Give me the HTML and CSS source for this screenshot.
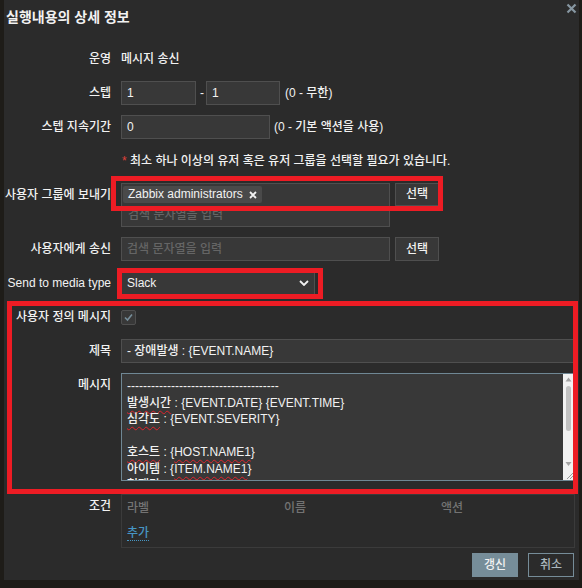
FILE: index.html
```html
<!DOCTYPE html>
<html lang="ko">
<head>
<meta charset="utf-8">
<title>실행내용의 상세 정보</title>
<link rel="stylesheet" href="styles.css">
</head>
<body>
<div class="dialog">
  <div class="header">
    <h4 class="title">실행내용의 상세 정보</h4>
    <button class="close" type="button" aria-label="닫기">
      <svg width="11" height="11" viewBox="0 0 11 11"><path d="M1.5 1.5 L9.5 9.5 M9.5 1.5 L1.5 9.5" stroke="#8797a2" stroke-width="2.2" fill="none"/></svg>
    </button>
  </div>

  <div class="form">
    <div class="label h23">운영</div>
    <div class="field h23">메시지 송신</div>

    <div class="label">스텝</div>
    <div class="field">
      <div class="input w75">1</div>
      <span class="dash">-</span>
      <div class="input w74">1</div>
      <span class="hint">(0 - 무한)</span>
    </div>

    <div class="label">스텝 지속기간</div>
    <div class="field">
      <div class="input w149">0</div>
      <span class="hint hint-sm">(0 - 기본 액션을 사용)</span>
    </div>

    <div class="label"></div>
    <div class="field note"><span class="req">*</span>&nbsp;최소 하나 이상의 유저 혹은 유저 그룹을 선택할 필요가 있습니다.</div>

    <div class="label">사용자 그룹에 보내기</div>
    <div class="field top">
      <div class="ms">
        <div class="ms-tags">
          <span class="tag">Zabbix administrators
            <svg width="8" height="8" viewBox="0 0 8 8"><path d="M1 1 L7 7 M7 1 L1 7" stroke="#f2f2f2" stroke-width="1.8" fill="none"/></svg>
          </span>
        </div>
        <div class="ms-search">검색 문자열을 입력</div>
      </div>
      <button class="btn" type="button">선택</button>
    </div>

    <div class="label">사용자에게 송신</div>
    <div class="field">
      <div class="input w269 placeholder">검색 문자열을 입력</div>
      <button class="btn btn24" type="button">선택</button>
    </div>

    <div class="label">Send to media type</div>
    <div class="field">
      <div class="select">
        <span>Slack</span>
        <svg width="10" height="6" viewBox="0 0 10 6"><path d="M1 1 L5 5 L9 1" stroke="#f2f2f2" stroke-width="1.8" fill="none"/></svg>
      </div>
    </div>

    <div class="label">사용자 정의 메시지</div>
    <div class="field">
      <span class="cb">
        <svg width="13" height="13" viewBox="0 0 13 13"><path d="M3 6.5 L5.5 9 L10 3.5" stroke="#768d99" stroke-width="1.6" fill="none"/></svg>
      </span>
    </div>

    <div class="label">제목</div>
    <div class="field">
      <div class="input full">- 장애발생 : {EVENT.NAME}</div>
    </div>

    <div class="label">메시지</div>
    <div class="field top">
      <div class="ta">
        <div class="ta-text">
          <div class="ln">--------------------------------------</div>
          <div class="ln"><span class="sp">발생시간</span> : {EVENT.DATE} {EVENT.TIME}</div>
          <div class="ln"><span class="sp">심각도</span> : {EVENT.SEVERITY}</div>
          <div class="ln">&nbsp;</div>
          <div class="ln"><span class="sp">호스트</span> : {<span class="sp">HOST.NAME1</span>}</div>
          <div class="ln">아이템 : {<span class="sp">ITEM.NAME1</span>}</div>
          <div class="ln">현재값 : {ITEM.LASTVALUE1}</div>
        </div>
        <div class="sb">
          <svg width="11" height="106" viewBox="0 0 11 106">
            <path d="M2.5 7.5 L8.5 7.5 L5.5 3.5 Z" fill="#a3a3a3"/>
            <rect x="3" y="12" width="5" height="45" rx="2.5" fill="#c1c1c1"/>
            <path d="M2.5 88 L8.5 88 L5.5 92 Z" fill="#a3a3a3"/>
            <path d="M10 99 L4 105 M10 102 L7 105" stroke="#9a9a9a" stroke-width="1" fill="none"/>
          </svg>
        </div>
      </div>
    </div>

    <div class="label cond-label">조건</div>
    <div class="field top cond-field">
      <div class="cond">
        <div class="cond-head">
          <span>라벨</span><span>이름</span><span>액션</span>
        </div>
        <div class="cond-add"><a class="link" href="#">추가</a></div>
      </div>
    </div>
  </div>

  <div class="footer">
    <button class="btn-main" type="button">갱신</button>
    <button class="btn-alt" type="button">취소</button>
  </div>

  <div class="mark mark-1"></div>
  <div class="mark mark-2"></div>
  <div class="mark mark-3"></div>
</div>
</body>
</html>
```

FILE: styles.css
```css
* { box-sizing: border-box; }
html, body { margin: 0; padding: 0; }
body {
  width: 582px;
  height: 588px;
  overflow: hidden;
  background: #1e1c18;
  color: #f2f2f2;
  font-family: "Liberation Sans", "Noto Sans CJK KR", sans-serif;
  font-size: 12px;
  font-weight: 500;
  line-height: 1.2;
}

.dialog {
  position: relative;
  margin-left: 4px;
  width: 575px;
  background: #2b2b2b;
  padding: 0 4px 3px 2px;
}

.header {
  height: 48px;
  display: flex;
  justify-content: space-between;
  align-items: flex-start;
}
.title {
  margin: 7px 0 0;
  font-size: 14px;
  line-height: 20px;
  font-weight: bold;
}
.close {
  margin: 3px -2px 0 0;
  width: 11px;
  height: 11px;
  padding: 0;
  border: 0;
  background: none;
  display: block;
}
.close svg { display: block; }

.form {
  display: grid;
  grid-template-columns: 105px 454px;
  column-gap: 10px;
  row-gap: 10px;
  align-items: start;
}
.label {
  display: flex;
  justify-content: flex-end;
  white-space: nowrap;
  height: 24px;
  line-height: 24px;
}
.field {
  display: flex;
  align-items: center;
  min-height: 24px;
  white-space: nowrap;
}
.field.top { align-items: flex-start; }
.h23 { height: 23px; line-height: 23px; min-height: 23px; }

.input {
  height: 24px;
  background: #383838;
  border: 1px solid #4f4f4f;
  padding: 0 5px;
  line-height: 22px;
  white-space: nowrap;
  overflow: hidden;
}
.w75 { width: 75px; }
.w74 { width: 74px; }
.w149 { width: 149px; }
.w269 { width: 269px; }
.full { width: 454px; }
.placeholder { color: #656565; }
.dash { margin: 0 2px 0 4px; }
.hint { margin-left: 5px; }
.hint-sm { margin-left: 4px; }

.note { padding-left: 1px; }
.req { color: #e0413a; }

.ms {
  width: 269px;
  height: 44px;
  background: #383838;
  border: 1px solid #4f4f4f;
}
.ms-tags { height: 21px; padding: 2px 0 0 1px; }
.tag {
  display: inline-flex;
  align-items: center;
  gap: 6px;
  height: 17px;
  padding: 0 5px;
  background: #4a4a4a;
  border-radius: 2px;
  line-height: 17px;
}
.ms-search {
  height: 21px;
  line-height: 21px;
  padding-left: 6px;
  color: #656565;
}

.btn {
  margin-left: 5px;
  width: 44px;
  height: 23px;
  padding: 0;
  background: #383838;
  border: 1px solid #4f4f4f;
  color: #f2f2f2;
  font: inherit;
  line-height: 21px;
}
.btn24 { height: 24px; }

.select {
  width: 194px;
  height: 24px;
  display: flex;
  align-items: center;
  justify-content: space-between;
  padding: 0 5px;
  background: #383838;
  border: 1px solid #4f4f4f;
}
.select svg { display: block; }

.cb {
  display: flex;
  align-items: center;
  justify-content: center;
  width: 15px;
  height: 15px;
  background: #383838;
  border: 1px solid #4f4f4f;
  border-radius: 2px;
}
.cb svg { display: block; }

.ta {
  width: 454px;
  height: 108px;
  display: flex;
  background: #383838;
  border: 1px solid #6f8794;
}
.ta-text {
  flex: 1;
  overflow: hidden;
  padding: 4px 5px 0;
  line-height: 16.5px;
}
.ln { height: 16.5px; white-space: pre; }
.sp {
  text-decoration: underline wavy #e0242c;
  text-decoration-thickness: 1px;
  text-underline-offset: 3px;
}
.sb { width: 11px; background: #f1f1f1; }
.sb svg { display: block; }

.cond-label, .cond-field { margin-top: 3px; }
.cond {
  width: 454px;
  height: 54px;
  border: 1px solid #3b3b3b;
  padding: 4px 5px;
}
.cond-head {
  display: grid;
  grid-template-columns: 157px 157px 1fr;
  line-height: 18px;
  color: #737373;
}
.cond-add { margin-top: 7px; line-height: 18px; }
.link {
  color: #4796c4;
  text-decoration: none;
  border-bottom: 1px dotted #4796c4;
}

.footer {
  display: flex;
  justify-content: flex-end;
  gap: 10px;
  margin-top: 5px;
  padding-right: 1px;
}
.btn-main, .btn-alt {
  width: 46px;
  height: 24px;
  padding: 0;
  font: inherit;
  line-height: 22px;
}
.btn-main {
  background: #768d99;
  border: 1px solid #768d99;
  color: #f2f2f2;
}
.btn-alt {
  background: transparent;
  border: 1px solid #768d99;
  color: #aab6bd;
}

.mark {
  position: absolute;
  border: 5px solid #ed1c24;
  pointer-events: none;
}
.mark-1 { left: 107px; top: 176px; width: 332px; height: 35px; }
.mark-2 { left: 113px; top: 268px; width: 206px; height: 31px; }
.mark-3 { left: 3px; top: 301px; width: 571px; height: 193px; }
```
